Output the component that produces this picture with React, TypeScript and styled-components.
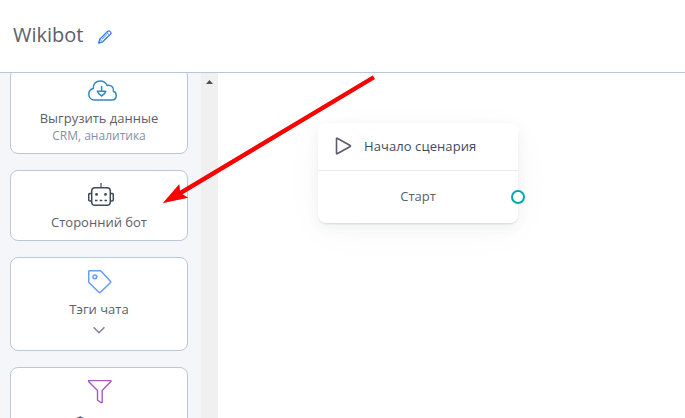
import React from "react";
import styled, { createGlobalStyle } from "styled-components";

const GlobalStyle = createGlobalStyle`
  * { box-sizing: border-box; }
  html, body, #root { height: 100%; }
  body {
    margin: 0;
    overflow: hidden;
    background: #fff;
    font-family: "Open Sans", "Noto Sans", sans-serif;
  }
  svg { display: block; flex: none; }
`;

const Page = styled.div`
  position: relative;
  display: flex;
  flex-direction: column;
  width: 685px;
  height: 418px;
  overflow: hidden;
`;

const Header = styled.header`
  flex: none;
  display: flex;
  align-items: center;
  gap: 15px;
  height: 73px;
  padding: 0 13px 3px;
  border-bottom: 1px solid #b9c8d8;
`;

const Title = styled.h1`
  margin: 0;
  font-size: 20px;
  line-height: 28px;
  font-weight: 400;
  color: #5d6068;
`;

const EditButton = styled.button`
  display: flex;
  padding: 4px 0 0;
  border: 0;
  background: none;
`;

const Body = styled.div`
  flex: 1;
  min-height: 0;
  display: flex;
`;

const Sidebar = styled.aside`
  flex: none;
  width: 201px;
  overflow: hidden;
  background: #f4f6f9;
`;

const CardList = styled.div`
  display: flex;
  flex-direction: column;
  gap: 16px;
  width: 178px;
  margin: -5px 0 0 10px;
`;

const Card = styled.div<{ $height: number }>`
  flex: none;
  display: flex;
  flex-direction: column;
  align-items: center;
  height: ${(p) => p.$height}px;
  padding-top: 11px;
  border: 1px solid #b9c8d8;
  border-radius: 8px;
  background: #fff;
`;

const IconSlot = styled.div<{ $top?: number }>`
  width: 22px;
  height: 26px;
  padding-top: ${(p) => p.$top ?? 1}px;
`;

const CardTitle = styled.div<{ $gap?: number }>`
  margin-top: ${(p) => p.$gap ?? 5}px;
  font-size: 13px;
  line-height: 18px;
  color: #5d6068;
  white-space: nowrap;
`;

const CardHint = styled.div`
  font-size: 12px;
  line-height: 17px;
  color: #8391a5;
`;

const Expander = styled.div`
  margin-top: 8px;
`;

const Scrollbar = styled.div`
  flex: none;
  display: flex;
  justify-content: center;
  width: 17px;
  padding-top: 7px;
  background: #f0f0f0;
`;

const Canvas = styled.main`
  flex: 1;
  position: relative;
`;

const Node = styled.section`
  position: absolute;
  left: 100px;
  top: 50px;
  width: 200px;
  height: 100px;
  border-radius: 8px;
  background: #fff;
  box-shadow: 0 2px 2px -1px rgba(60, 85, 75, 0.18),
    0 4px 14px rgba(50, 60, 60, 0.06), 0 8px 44px rgba(50, 60, 60, 0.03);
`;

const NodeHeader = styled.div`
  display: flex;
  align-items: center;
  gap: 12px;
  height: 48px;
  padding: 0 0 1px 17px;
  border-bottom: 1px solid #e8eaf5;
  font-size: 13px;
  color: #424b61;
`;

const NodeName = styled.span`
  letter-spacing: 0.08px;
`;

const NodeBody = styled.div`
  display: flex;
  align-items: center;
  justify-content: center;
  height: 52px;
  padding-bottom: 2px;
  font-size: 13px;
  color: #5d6068;
`;

const Port = styled.span`
  position: absolute;
  right: -7px;
  top: 67px;
  width: 14px;
  height: 14px;
  border: 2px solid #00a7b0;
  border-radius: 50%;
  background: #fff;
`;

const ArrowOverlay = styled.svg`
  position: absolute;
  inset: 0;
  pointer-events: none;
  filter: drop-shadow(0.5px 0.5px 0.5px rgba(60, 0, 0, 0.4));
`;

const PencilIcon = () => (
  <svg width="14" height="14" viewBox="0 0 14 14" fill="none" stroke="#2f7bff" strokeLinejoin="round" strokeWidth="1.2">
    <path d="M.7 13.1 1.7 9.2 9.8 1.3q1-.9 2 0l.8.9q.9 1 0 1.9L4.5 12Z" />
    <path d="m1.8 9.3 2.7 2.6M8.7 2.4l2.9 2.8M4.1 9.2l4.7-4.5M5.5 10.4l4.7-4.6" strokeWidth=".9" />
    <path d="m.7 13.1.6-2.2 1.6 1.6Z" fill="#2f7bff" strokeWidth=".5" />
  </svg>
);

const CloudIcon = () => (
  <svg width="29" height="21" viewBox="0.3 0.5 29.4 21" fill="none" stroke="#3488be" strokeWidth="1.5" strokeLinejoin="round" strokeLinecap="round">
    <path d="M6.8 20.6h17.6c2.6 0 4.5-1.9 4.5-4.6 0-2-1.1-3.5-2.8-4.2.7-3.7-2.6-7.1-6.4-5.9C18.3 2.8 15.7 1.3 12.7 1.3c-4.5 0-7.4 3.2-7 7.6C3 9.5 1.1 11.8 1.1 14.8c0 3.3 2.4 5.8 5.7 5.8Z" />
    <path d="M14.1 7v4.8M9.8 11.8h8.6c-.7 2.2-2.2 3.7-4.3 4.8-2.1-1.1-3.6-2.6-4.3-4.8Z" />
  </svg>
);

const RobotIcon = () => (
  <svg width="26" height="23" viewBox="0 0 26 23" fill="none" stroke="#3d4b58" strokeWidth="1.5">
    <path d="M13 0v5" strokeWidth="1.2" />
    <rect x="3.7" y="4.7" width="18.6" height="17.6" rx="3.3" />
    <path d="M3.6 10.5H1.9Q.7 10.5.7 11.7v5.1q0 1.2 1.2 1.2h1.7M22.4 10.5h1.7q1.2 0 1.2 1.2v5.1q0 1.2-1.2 1.2h-1.7" />
    <circle cx="8.5" cy="11.4" r="1.4" fill="#3d4b58" stroke="none" />
    <circle cx="17.5" cy="11.4" r="1.4" fill="#3d4b58" stroke="none" />
    <path d="M7 17.5h2.5M11.7 17.5h2.6M16.5 17.5H19" />
  </svg>
);

const TagIcon = () => (
  <svg width="24" height="24" viewBox="0.3 0.3 24 24" fill="none" stroke="#649cff" strokeWidth="1.5" strokeLinejoin="round">
    <path d="M1 2.2Q1 1 2.2 1H12q.8 0 1.4.6l9.2 9.8q.8.8 0 1.6l-9.8 9.6q-.8.8-1.6 0L1.7 13.3Q1 12.6 1 11.8Z" />
    <circle cx="7.2" cy="7.1" r="1.9" />
  </svg>
);

const FilterIcon = () => (
  <svg width="24" height="24" viewBox="0.3 0.4 24 24" fill="none" stroke="#a45abb" strokeWidth="1.4" strokeLinejoin="round">
    <path d="M.8 1h22.4v1L14.5 11v11.9h-1.3L9.8 20.5V11L.8 2Z" />
  </svg>
);

const ChevronIcon = () => (
  <svg width="12" height="8" viewBox="0 0 12 8" fill="none" stroke="#7e8797" strokeWidth="1.6">
    <path d="m.6 1.3 5.4 5.4 5.4-5.4" />
  </svg>
);

const PlayIcon = () => (
  <svg width="17" height="18" viewBox="0 0 17 18" fill="none" stroke="#5c5b6c" strokeWidth="1.6" strokeLinejoin="round">
    <path d="M1.5 1.6v14.8q0 .6.7.3l13-7.2q.6-.5 0-1l-13-7.2q-.7-.3-.7.3Z" />
  </svg>
);

export default function App() {
  return (
    <Page>
      <GlobalStyle />
      <Header>
        <Title>Wikibot</Title>
        <EditButton aria-label="Edit">
          <PencilIcon />
        </EditButton>
      </Header>
      <Body>
        <Sidebar>
          <CardList>
            <Card $height={86}>
              <IconSlot $top={0}><CloudIcon /></IconSlot>
              <CardTitle $gap={3}>Выгрузить данные</CardTitle>
              <CardHint>CRM, аналитика</CardHint>
            </Card>
            <Card $height={71}>
              <IconSlot><RobotIcon /></IconSlot>
              <CardTitle>Сторонний бот</CardTitle>
            </Card>
            <Card $height={94}>
              <IconSlot><TagIcon /></IconSlot>
              <CardTitle>Тэги чата</CardTitle>
              <Expander><ChevronIcon /></Expander>
            </Card>
            <Card $height={71}>
              <IconSlot><FilterIcon /></IconSlot>
              <CardTitle $gap={6}>Фильтр</CardTitle>
            </Card>
          </CardList>
        </Sidebar>
        <Scrollbar>
          <svg width="7" height="4" viewBox="0 0 7 4" fill="#505050">
            <path d="M0 4 3.5 0 7 4Z" />
          </svg>
        </Scrollbar>
        <Canvas>
          <Node>
            <NodeHeader>
              <PlayIcon />
              <NodeName>Начало сценария</NodeName>
            </NodeHeader>
            <NodeBody>Старт</NodeBody>
            <Port />
          </Node>
        </Canvas>
      </Body>
      <ArrowOverlay width="685" height="418" viewBox="0 0 685 418" fill="#f00">
        <path d="M372.8 75.4 374.9 79.1 182.5 194.3 188 197.8 163 203 179.2 184.2 180 190.8Z" />
      </ArrowOverlay>
    </Page>
  );
}
